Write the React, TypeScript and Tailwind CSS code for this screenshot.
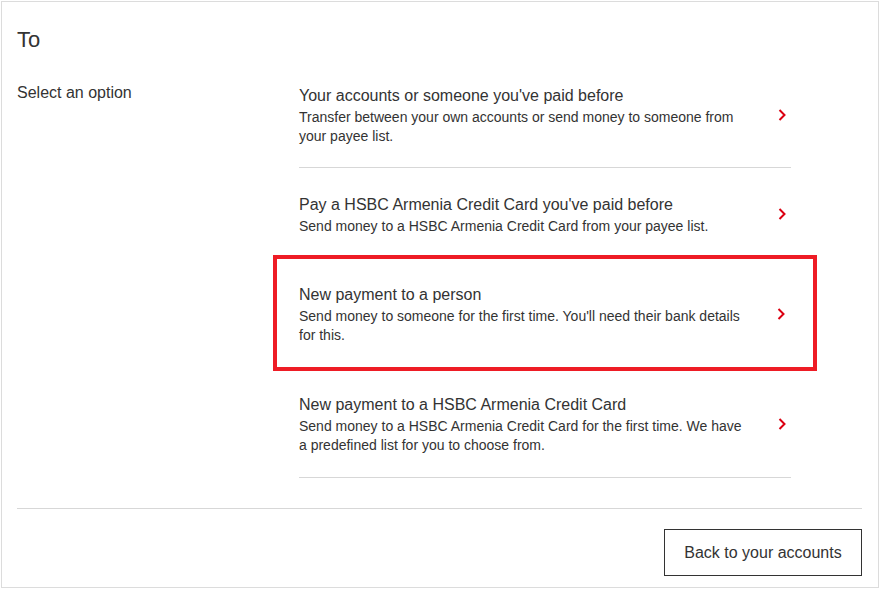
import React from "react";

type Option = {
  title: string;
  desc: string;
  wrap: string;
};

const options: Option[] = [
  {
    title: "Your accounts or someone you've paid before",
    desc: "Transfer between your own accounts or send money to someone from your payee list.",
    wrap: "mx-[26px] pt-[25px] pb-[21px] border-b border-[#d7d7d7]",
  },
  {
    title: "Pay a HSBC Armenia Credit Card you've paid before",
    desc: "Send money to a HSBC Armenia Credit Card from your payee list.",
    wrap: "mx-[26px] pt-[26px] pb-[19px]",
  },
  {
    title: "New payment to a person",
    desc: "Send money to someone for the first time. You'll need their bank details for this.",
    wrap: "border-4 border-[#ee1c25] pl-[22px] pr-[23px] pt-[25px] pb-[22px]",
  },
  {
    title: "New payment to a HSBC Armenia Credit Card",
    desc: "Send money to a HSBC Armenia Credit Card for the first time. We have a predefined list for you to choose from.",
    wrap: "mx-[26px] pt-[23px] pb-[22px] border-b border-[#d7d7d7]",
  },
];

function Chevron() {
  return (
    <svg width="8" height="12" viewBox="0 0 8 12" fill="none">
      <path d="M1.5 1 L6.5 6 L1.5 11" stroke="#db0011" strokeWidth="2" />
    </svg>
  );
}

export default function App() {
  return (
    <div
      className="bg-white w-[881px] h-[592px] pt-px pl-px text-[#333]"
      style={{ fontFamily: '"Liberation Sans", Arial, sans-serif' }}
    >
      <div className="flex flex-col border border-[#dcdcdc] w-[878px] h-[587px] pl-[15px] pr-[16px] pt-[25px]">
        <h1 className="text-[22px] leading-[26px] font-normal">To</h1>

        <div className="flex mt-[7px]">
          {/* Left label */}
          <div className="w-[256px] pt-[22px] text-base leading-[22px]">
            Select an option
          </div>

          {/* Options */}
          <div className="w-[544px] flex flex-col">
            {options.map((o) => (
              <div key={o.title} className={o.wrap}>
                <div className="flex items-center justify-between cursor-pointer">
                  <div className="w-[450px]">
                    <div className="text-base leading-[22px]">{o.title}</div>
                    <div className="mt-px text-sm leading-[19px]">{o.desc}</div>
                  </div>
                  <div className="pr-[5px] pb-[2px] flex items-center">
                    <Chevron />
                  </div>
                </div>
              </div>
            ))}
          </div>
        </div>

        <div className="mt-[30px] border-t border-[#d7d7d7]" />

        <div className="flex justify-end mt-[20px]">
          <button className="w-[198px] h-[47px] border border-[#333] text-base text-[#333] bg-white">
            Back to your accounts
          </button>
        </div>
      </div>
    </div>
  );
}
